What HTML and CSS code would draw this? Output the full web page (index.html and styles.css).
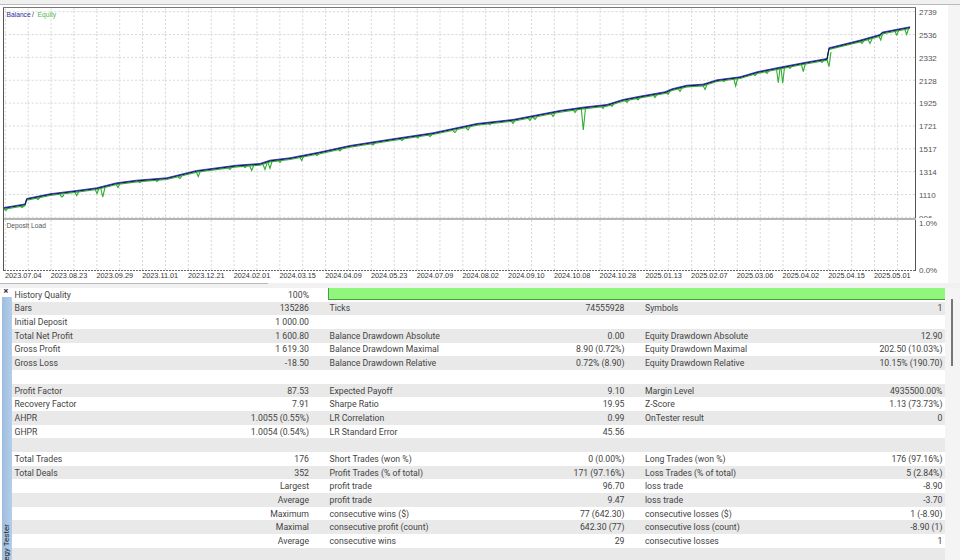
FILE: index.html
```html
<!DOCTYPE html>
<html lang="en">
<head>
  <meta charset="UTF-8" />
  <title>Strategy Tester</title>
  <link rel="stylesheet" href="styles.css">
</head>
<body>
  <div class="app">
    <div class="topbar"></div>

    <svg class="chart" viewBox="0 5 948 278" width="948" height="278">
      <defs>
        <pattern id="grid" patternUnits="userSpaceOnUse" x="4.82" y="11.2" width="22.876" height="22.85">
          <line class="grid-line" x1="0.5" y1="0" x2="0.5" y2="22.85" />
          <line class="grid-line" x1="0" y1="0.5" x2="22.876" y2="0.5" />
        </pattern>
        <pattern id="grid-v" patternUnits="userSpaceOnUse" x="4.82" y="220" width="22.876" height="50">
          <line class="grid-line" x1="0.5" y1="0" x2="0.5" y2="50" />
        </pattern>
        <polyline id="balance" points="4,208 25,204.5 26.7,199 50,194.3 76.7,191 96.7,188.3 116.7,183.3 136.7,180.7 166.7,178.3 196.7,171 236.7,165.7 260,164 270,160.7 290,158.3 320,152.5 350,146 393,139.3 433,133.3 477,124 513,120 560,111 583,107.7 607,105 623,100 640,96.7 665,92.3 672,89.3 687,85.7 703,84.7 717,80.3 740,77.3 757,72.3 780,67.7 803,63.3 827,59 829,48.3 860,40.7 880,35 882,32.7 910,27.3" />
      </defs>

      <rect x="4" y="8" width="911" height="210" fill="url(#grid)" />
      <rect x="4" y="220" width="911" height="50" fill="url(#grid-v)" />

      <!-- equity follows balance, with the drawdown spikes on top -->
      <use href="#balance" class="equity" transform="translate(0 1.2)" />
      <path class="equity" d="M4,209 L6,210.5 L8,208 M20,206 L22,207.5 L24,206 M36,198 L38,199.5 L40,197.5 M60,195 L62,197 L64,195 M74.7,192 L76.7,195.5 L78.7,191.5 M95,189 L97,193.5 L99,188.5 M100.7,188 L102.7,197 L105,187.5 M116,184 L118,187.5 L120,183.5 M138,181 L140,182.5 L142,181 M155,180 L157,181.5 L159,179.5 M178,177 L180,178.5 L182,176 M196.3,172 L198.3,176.5 L200.3,171 M228,168 L230,169.5 L232,167 M243,166 L245,167.5 L247,166 M249.7,166 L251.7,170.5 L253.7,165.5 M263,164.5 L265,169.5 L267,163.5 M268,162.5 L270,168.5 L272,161.5 M278,160 L280,162.5 L282,159.5 M299.7,157 L301.7,160.5 L303.7,156 M315,154 L317,155.5 L319,153.5 M338,149 L340,151 L342,148.5 M371,143.5 L373,145 L375,143 M400,139 L402,140.5 L404,138.5 M416,136 L418,138 L420,135.5 M428,135 L430,136.5 L432,134.5 M453,131 L455,132.5 L457,130 M466,128 L468,130 L470,127 M488,123 L490,124.5 L492,122.5 M511,121 L513,123.5 L515,120.5 M528,118 L530,120.5 L532,117.5 M533,117.5 L535,119.5 L537,117 M551,113.5 L553,116.5 L555,113 M573,110 L575,112.5 L577,109.5 M581.3,108.5 L583.3,130 L585.5,108 M601,106 L603,108.5 L605,105.5 M610,104.5 L612,106.5 L614,103.5 M625,100.5 L627,102.5 L629,100 M636,98 L638,100 L640,97.5 M653,95 L655,97.5 L657,94.5 M666,92.5 L668,94.5 L670,91.5 M678,88.5 L680,91.5 L682,88 M703,85.5 L705,89.5 L707,84.5 M722,80 L724,81.5 L726,79.5 M733.7,78.5 L735.7,86 L737.7,78 M753,74 L755,75.5 L757,73.5 M765,71.5 L767,73.5 L769,71 M776.5,69 L778.3,82.7 L780,68.5 M781,68 L782.7,83.3 L784.5,67.5 M788,66.5 L790,68.5 L792,66 M801.3,64 L803.3,71.7 L805.3,63.5 M820,60.5 L822,62.5 L824,60 M827,59.5 L829,66.7 L831,52 M860,41.5 L862,43.5 L864,41 M868,39.5 L870,43.5 L872,39 M878.7,36 L880.7,40 L882.7,33.5 M894.7,31 L896.7,35 L898.7,30.5 M904.7,29 L906.7,34.5 L908.7,28" />

      <use href="#balance" class="balance-hi" transform="translate(0 -0.5)" />
      <use href="#balance" class="balance" transform="translate(0 0.2)" />

      <text class="legend balance-text" x="6.5" y="16.5">Balance</text>
      <text class="legend" x="32" y="16.5">/</text>
      <text class="legend equity-text" x="37.5" y="16.5">Equity</text>
      <text class="legend load-text" x="6.5" y="227.5">Deposit Load</text>

      <g class="axis">
        <text x="919" y="15">2739</text>
        <text x="919" y="38">2536</text>
        <text x="919" y="61">2332</text>
        <text x="919" y="84">2128</text>
        <text x="919" y="106">1925</text>
        <text x="919" y="129">1721</text>
        <text x="919" y="152">1517</text>
        <text x="919" y="175">1314</text>
        <text x="919" y="198">1110</text>
        <text x="919" y="220.5">906</text>
      </g>

      <rect class="blank" x="916" y="218" width="32" height="4" />
      <path class="frame" d="M3.5,8 V271 M915.5,7.5 V271" />
      <line class="frame-top" x1="3" y1="7.5" x2="916" y2="7.5" />
      <rect class="divider" x="4" y="218" width="912" height="2" />
      <line class="frame-bottom" x1="4" y1="270.5" x2="916" y2="270.5" />

      <g class="axis">
        <text x="919" y="226">1.0%</text>
        <text x="919" y="273">0.0%</text>
      </g>

      <g class="dates">
        <text x="5" y="278">2023.07.04</text>
        <text x="50.7" y="278">2023.08.23</text>
        <text x="96.5" y="278">2023.09.29</text>
        <text x="142.2" y="278">2023.11.01</text>
        <text x="188" y="278">2023.12.21</text>
        <text x="233.7" y="278">2024.02.01</text>
        <text x="279.4" y="278">2024.03.15</text>
        <text x="325.2" y="278">2024.04.09</text>
        <text x="370.9" y="278">2024.05.23</text>
        <text x="416.7" y="278">2024.07.09</text>
        <text x="462.4" y="278">2024.08.02</text>
        <text x="508.1" y="278">2024.09.10</text>
        <text x="553.9" y="278">2024.10.08</text>
        <text x="599.6" y="278">2024.10.28</text>
        <text x="645.4" y="278">2025.01.13</text>
        <text x="691.1" y="278">2025.02.07</text>
        <text x="736.8" y="278">2025.03.06</text>
        <text x="782.6" y="278">2025.04.02</text>
        <text x="828.3" y="278">2025.04.15</text>
        <text x="874" y="278">2025.05.01</text>
      </g>
    </svg>

    <div class="splitter"></div>

    <section class="tester">
      <aside class="side">
        <div class="close">×</div>
        <div class="tab"><span>Strategy Tester</span></div>
      </aside>

      <div class="report">
        <div class="row">
          <div class="cell"><span>History Quality</span><span>100%</span></div>
          <div class="quality"></div>
        </div>
        <div class="row">
          <div class="cell"><span>Bars</span><span>135286</span></div>
          <div class="cell"><span>Ticks</span><span>74555928</span></div>
          <div class="cell"><span>Symbols</span><span>1</span></div>
        </div>
        <div class="row">
          <div class="cell"><span>Initial Deposit</span><span>1 000.00</span></div>
        </div>
        <div class="row">
          <div class="cell"><span>Total Net Profit</span><span>1 600.80</span></div>
          <div class="cell"><span>Balance Drawdown Absolute</span><span>0.00</span></div>
          <div class="cell"><span>Equity Drawdown Absolute</span><span>12.90</span></div>
        </div>
        <div class="row">
          <div class="cell"><span>Gross Profit</span><span>1 619.30</span></div>
          <div class="cell"><span>Balance Drawdown Maximal</span><span>8.90 (0.72%)</span></div>
          <div class="cell"><span>Equity Drawdown Maximal</span><span>202.50 (10.03%)</span></div>
        </div>
        <div class="row">
          <div class="cell"><span>Gross Loss</span><span>-18.50</span></div>
          <div class="cell"><span>Balance Drawdown Relative</span><span>0.72% (8.90)</span></div>
          <div class="cell"><span>Equity Drawdown Relative</span><span>10.15% (190.70)</span></div>
        </div>
        <div class="row"></div>
        <div class="row">
          <div class="cell"><span>Profit Factor</span><span>87.53</span></div>
          <div class="cell"><span>Expected Payoff</span><span>9.10</span></div>
          <div class="cell"><span>Margin Level</span><span>4935500.00%</span></div>
        </div>
        <div class="row">
          <div class="cell"><span>Recovery Factor</span><span>7.91</span></div>
          <div class="cell"><span>Sharpe Ratio</span><span>19.95</span></div>
          <div class="cell"><span>Z-Score</span><span>1.13 (73.73%)</span></div>
        </div>
        <div class="row">
          <div class="cell"><span>AHPR</span><span>1.0055 (0.55%)</span></div>
          <div class="cell"><span>LR Correlation</span><span>0.99</span></div>
          <div class="cell"><span>OnTester result</span><span>0</span></div>
        </div>
        <div class="row">
          <div class="cell"><span>GHPR</span><span>1.0054 (0.54%)</span></div>
          <div class="cell"><span>LR Standard Error</span><span>45.56</span></div>
        </div>
        <div class="row"></div>
        <div class="row">
          <div class="cell"><span>Total Trades</span><span>176</span></div>
          <div class="cell"><span>Short Trades (won %)</span><span>0 (0.00%)</span></div>
          <div class="cell"><span>Long Trades (won %)</span><span>176 (97.16%)</span></div>
        </div>
        <div class="row">
          <div class="cell"><span>Total Deals</span><span>352</span></div>
          <div class="cell"><span>Profit Trades (% of total)</span><span>171 (97.16%)</span></div>
          <div class="cell"><span>Loss Trades (% of total)</span><span>5 (2.84%)</span></div>
        </div>
        <div class="row">
          <div class="cell"><span></span><span>Largest</span></div>
          <div class="cell"><span>profit trade</span><span>96.70</span></div>
          <div class="cell"><span>loss trade</span><span>-8.90</span></div>
        </div>
        <div class="row">
          <div class="cell"><span></span><span>Average</span></div>
          <div class="cell"><span>profit trade</span><span>9.47</span></div>
          <div class="cell"><span>loss trade</span><span>-3.70</span></div>
        </div>
        <div class="row">
          <div class="cell"><span></span><span>Maximum</span></div>
          <div class="cell"><span>consecutive wins ($)</span><span>77 (642.30)</span></div>
          <div class="cell"><span>consecutive losses ($)</span><span>1 (-8.90)</span></div>
        </div>
        <div class="row">
          <div class="cell"><span></span><span>Maximal</span></div>
          <div class="cell"><span>consecutive profit (count)</span><span>642.30 (77)</span></div>
          <div class="cell"><span>consecutive loss (count)</span><span>-8.90 (1)</span></div>
        </div>
        <div class="row">
          <div class="cell"><span></span><span>Average</span></div>
          <div class="cell"><span>consecutive wins</span><span>29</span></div>
          <div class="cell"><span>consecutive losses</span><span>1</span></div>
        </div>
        <div class="row"></div>
      </div>

      <div class="scroll"><div class="thumb"></div></div>
    </section>
  </div>
</body>
</html>
```

FILE: styles.css
```css
* {
  margin: 0;
  padding: 0;
  box-sizing: border-box;
}

body {
  font-family: Roboto, "Liberation Sans", sans-serif;
  background: #fff;
  overflow: hidden;
}

.app {
  width: 960px;
  height: 560px;
  overflow: hidden;
  background: linear-gradient(#f5f5f5, #f5f5f5) 948px 0 / 12px 283px no-repeat, #fff;
}

.topbar {
  height: 5px;
  background: #f0f0f0;
  border-bottom: 1px solid #bbb;
}

.chart {
  display: block;
}

.grid-line {
  stroke: #d6d6d6;
  stroke-width: 1;
  stroke-dasharray: 2 2;
}

polyline {
  fill: none;
}

.equity {
  fill: none;
  stroke: #2fae2f;
  stroke-width: 1.1;
}

.balance-hi {
  stroke: #3a3fd0;
  stroke-width: 1;
}

.balance {
  stroke: #0b1250;
  stroke-width: 1;
}

.chart text {
  font-family: "Liberation Sans", Arial, sans-serif;
}

.legend {
  font-size: 6.7px;
  fill: #333;
}

.balance-text {
  fill: #2a2a9a;
}

.equity-text {
  fill: #4fb84f;
}

.load-text {
  fill: #555;
}

.axis text {
  font-size: 8px;
  fill: #555;
}

.dates text {
  font-size: 7.3px;
  fill: #333;
}

.blank {
  fill: #fff;
}

.frame {
  fill: none;
  stroke: #555;
  stroke-width: 1;
}

.frame-top {
  stroke: #777;
  stroke-width: 1;
}

.frame-bottom {
  stroke: #666;
  stroke-width: 1;
  stroke-dasharray: 2 1;
}

.divider {
  fill: #b5b5b5;
}

.splitter {
  height: 5px;
  background: linear-gradient(#b8b8b8, #b8b8b8) 0 0 / 268px 1px no-repeat, #f1f1f1;
}

.tester {
  display: flex;
  height: 272px;
}

.side {
  width: 12px;
  flex: none;
  background: #fff;
}

.close {
  height: 9px;
  font-size: 9px;
  line-height: 7px;
  font-weight: 700;
  text-align: center;
  color: #333;
}

.tab {
  height: 263px;
  margin-left: 2px;
  padding-top: 227px;
  overflow: hidden;
  background: linear-gradient(90deg, #9dbde0, #b5cee8);
}

.tab span {
  display: block;
  writing-mode: vertical-rl;
  transform: rotate(180deg);
  font-size: 8px;
  line-height: 10px;
  white-space: nowrap;
  color: #222;
}

.report {
  width: 933px;
  flex: none;
}

.row {
  display: grid;
  grid-template-columns: 294.5px 295px 297.5px;
  column-gap: 20.5px;
  height: 13.68px;
  padding: 0 2.5px;
  font-size: 8.7px;
  line-height: 13.68px;
  color: #444;
  white-space: nowrap;
}

.row:nth-child(even) {
  background: #e9e9e9;
}

.cell {
  display: flex;
  justify-content: space-between;
  padding-top: 0.8px;
}

.quality {
  grid-column: 2 / 4;
  height: 12px;
  margin: 0 -2.5px 0 -1.5px;
  background: #8ff87c;
  border-left: 1px solid #4f9a45;
  border-bottom: 1px solid #4f9a45;
}

.scroll {
  flex: 1;
  padding: 11px 0 0 6px;
  background: #f4f4f4;
}

.thumb {
  width: 2px;
  height: 67px;
  background: #777;
}
```
